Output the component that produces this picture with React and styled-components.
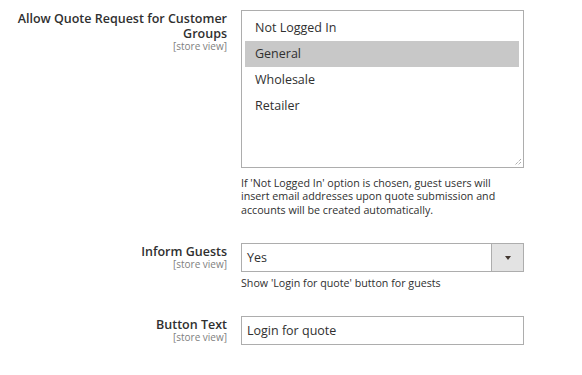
import React from "react";
import styled, { createGlobalStyle } from "styled-components";

/* ================= STYLES ================= */

const GlobalStyle = createGlobalStyle`
  html, body {
    margin: 0;
    padding: 0;
    background: #fff;
  }
  body {
    font-family: "Open Sans", "Liberation Sans", sans-serif;
    color: #303030;
  }
`;

const Form = styled.div`
  padding-top: 10px;
  display: flex;
  flex-direction: column;
`;

const Row = styled.div`
  display: grid;
  grid-template-columns: 227px 283px;
  column-gap: 14px;
  margin-bottom: ${({ gap }) => gap || 0}px;
`;

const Label = styled.div`
  text-align: right;
  padding-top: 1px;
`;

const LabelText = styled.div`
  font-size: 12.5px;
  font-weight: 600;
  line-height: 15px;
`;

const Scope = styled.div`
  font-size: 10px;
  line-height: 11px;
  color: #808080;
`;

const Control = styled.div`
  display: flex;
  flex-direction: column;
`;

const MultiSelect = styled.div`
  position: relative;
  box-sizing: border-box;
  height: 158px;
  border: 1px solid #adadad;
  padding: 4px 4px 3px 3px;
  background: #fff;
`;

const Option = styled.div`
  height: 26px;
  line-height: 26px;
  padding-left: 10px;
  font-size: 12.5px;
  background: ${({ selected }) => (selected ? "#c8c8c8" : "transparent")};
`;

const Grip = styled.svg`
  position: absolute;
  right: 1px;
  bottom: 1px;
`;

const Note = styled.div`
  margin-top: ${({ top }) => top}px;
  font-size: 10.7px;
  line-height: 13.4px;
  padding-right: 8px;
`;

const SelectBox = styled.div`
  box-sizing: border-box;
  height: 29px;
  border: 1px solid #adadad;
  display: flex;
  align-items: stretch;
  background: #fff;
`;

const SelectValue = styled.div`
  flex: 1;
  padding-left: 5px;
  font-size: 12.5px;
  line-height: 27px;
`;

const Arrow = styled.div`
  width: 31px;
  border-left: 1px solid #adadad;
  background: #e3e3e3;
  display: flex;
  align-items: center;
  justify-content: center;

  &::after {
    content: "";
    border-left: 3.5px solid transparent;
    border-right: 3.5px solid transparent;
    border-top: 4px solid #41362f;
  }
`;

const TextInput = styled.div`
  box-sizing: border-box;
  height: 29px;
  border: 1px solid #adadad;
  padding-left: 5px;
  font-size: 12.5px;
  line-height: 27px;
  background: #fff;
`;

/* ================= COMPONENT ================= */

const groups = ["Not Logged In", "General", "Wholesale", "Retailer"];

function App() {
  return (
    <>
      <GlobalStyle />
      <Form>
        <Row gap={26}>
          <Label>
            <LabelText>Allow Quote Request for Customer Groups</LabelText>
            <Scope>[store view]</Scope>
          </Label>
          <Control>
            <MultiSelect>
              {groups.map((g) => (
                <Option key={g} selected={g === "General"}>
                  {g}
                </Option>
              ))}
              <Grip width="9" height="9" viewBox="0 0 9 9">
                <path d="M8 2 L2 8 M8 5 L5 8" stroke="#8a8a8a" strokeWidth="1" strokeDasharray="1 1" />
              </Grip>
            </MultiSelect>
            <Note top={9}>
              If 'Not Logged In' option is chosen, guest users will insert email
              addresses upon quote submission and accounts will be created
              automatically.
            </Note>
          </Control>
        </Row>

        <Row gap={25}>
          <Label>
            <LabelText>Inform Guests</LabelText>
            <Scope>[store view]</Scope>
          </Label>
          <Control>
            <SelectBox>
              <SelectValue>Yes</SelectValue>
              <Arrow />
            </SelectBox>
            <Note top={5}>Show 'Login for quote' button for guests</Note>
          </Control>
        </Row>

        <Row>
          <Label>
            <LabelText>Button Text</LabelText>
            <Scope>[store view]</Scope>
          </Label>
          <Control>
            <TextInput>Login for quote</TextInput>
          </Control>
        </Row>
      </Form>
    </>
  );
}

export default App;
